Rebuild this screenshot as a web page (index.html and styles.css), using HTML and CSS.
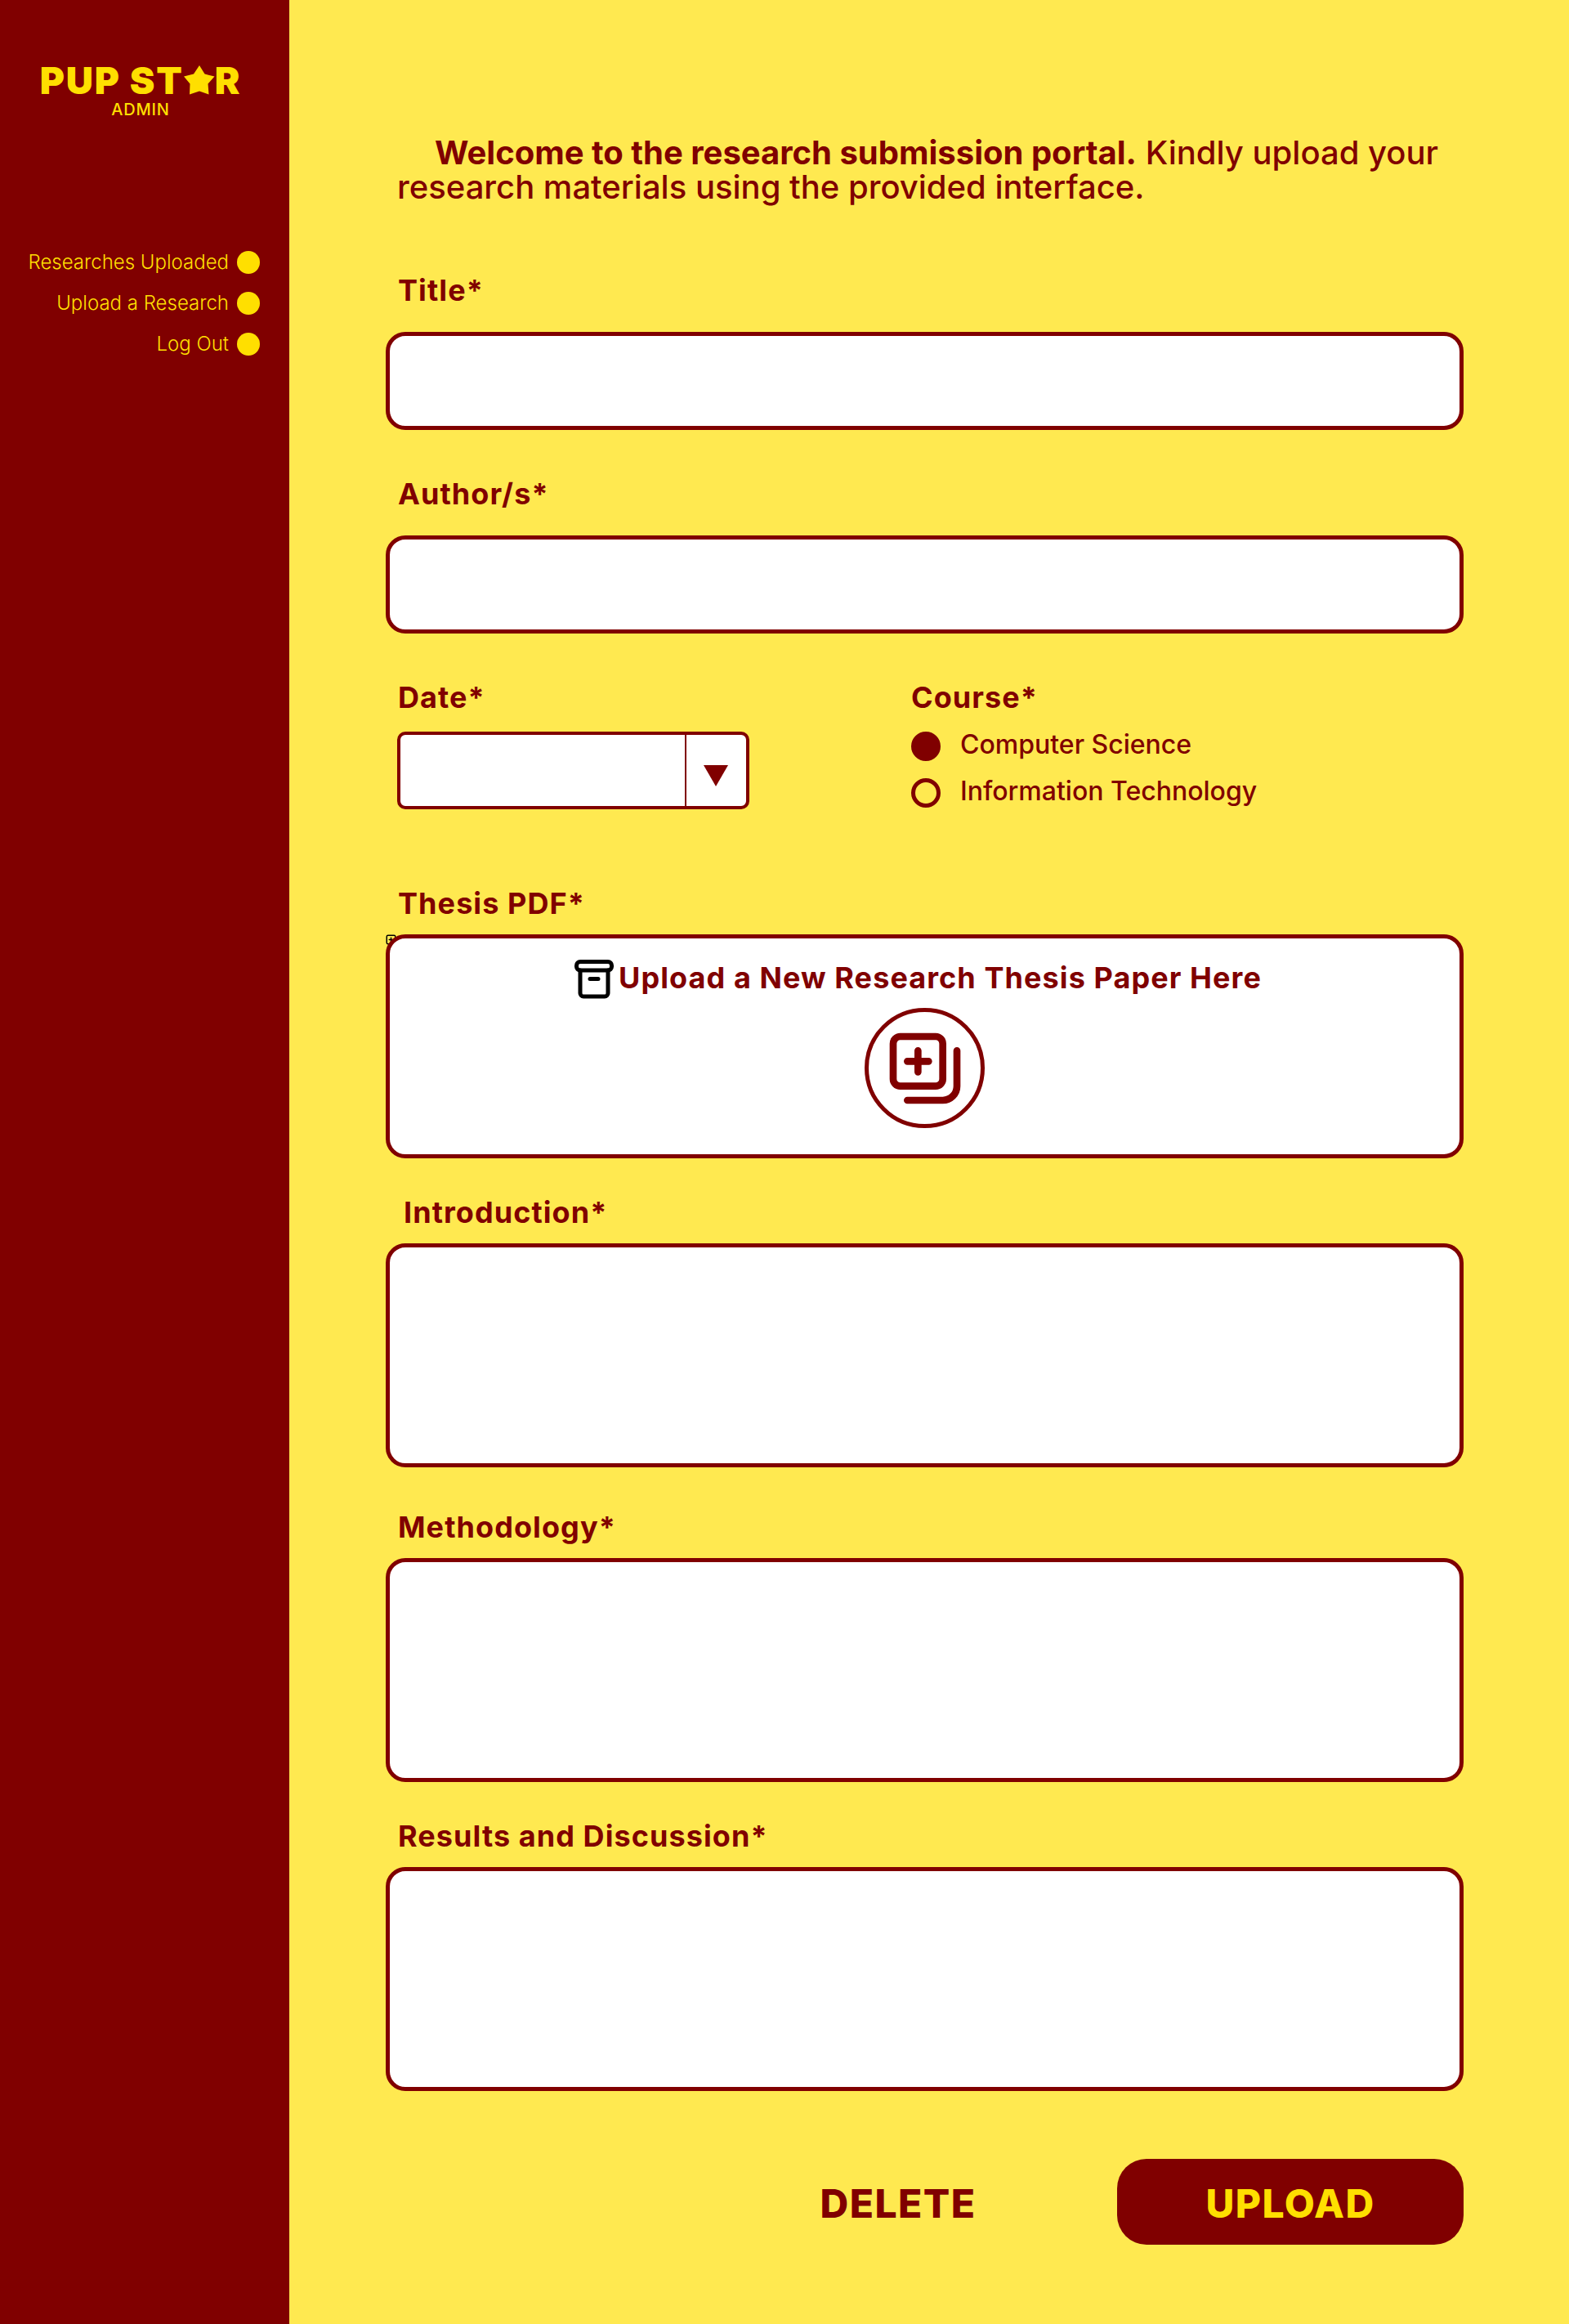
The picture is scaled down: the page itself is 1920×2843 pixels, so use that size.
FILE: index.html
```html
<!DOCTYPE html>
<html lang="en">
<head>
  <meta charset="utf-8">
  <meta name="viewport" content="width=device-width, initial-scale=1">
  <title>PUP Star Admin - Upload a Research</title>
  <link rel="stylesheet" href="styles.css">
</head>
<body>
  <div class="layout">
    <aside class="sidebar">
      <div class="brand">
        <div class="brand-name">
          <span>PUP ST</span>
          <svg class="brand-star" viewBox="0 0 38 36" aria-hidden="true">
            <path d="M19 0 25.500 10.500 37.500 13.500 29.500 22.500 30.500 35.500 19 31.500 7 35.500 7.500 22.500 0 13.500 12 10.500Z"/>
          </svg>
          <span>R</span>
        </div>
        <div class="brand-role">ADMIN</div>
      </div>
      <nav class="nav">
        <a class="nav-link" href="#researches">Researches Uploaded<span class="nav-dot"></span></a>
        <a class="nav-link" href="#upload">Upload a Research<span class="nav-dot"></span></a>
        <a class="nav-link" href="#logout">Log Out<span class="nav-dot"></span></a>
      </nav>
    </aside>

    <main class="main">
      <p class="welcome"><strong>Welcome to the research submission portal.</strong> Kindly upload your research materials using the provided interface.</p>

      <form class="form">
        <div class="field field-roomy">
          <label class="label" for="title">Title*</label>
          <input class="box" id="title" type="text">
        </div>
        <div class="field field-roomy">
          <label class="label" for="authors">Author/s*</label>
          <input class="box" id="authors" type="text">
        </div>

        <div class="columns">
          <div class="field field-medium">
            <label class="label" for="date">Date*</label>
            <div class="picker">
              <select class="picker-select" id="date"><option value=""></option></select>
              <span class="picker-arrow">
                <svg viewBox="0 0 30 26" width="30" height="26" aria-hidden="true"><path d="M0 0H30L15 26Z"/></svg>
              </span>
            </div>
          </div>
          <fieldset class="field field-medium">
            <legend class="label label-flush">Course*</legend>
            <div class="options">
              <label class="option"><input class="radio" type="radio" name="course" checked>Computer Science</label>
              <label class="option"><input class="radio" type="radio" name="course">Information Technology</label>
            </div>
          </fieldset>
        </div>

        <div class="field field-tight">
          <label class="label" for="thesis">Thesis PDF*</label>
          <div class="dropzone-wrap">
            <svg class="corner-icon" viewBox="0 0 24 24" aria-hidden="true">
              <rect x="3" y="3" width="14" height="14" rx="2"/>
              <path d="M7 10h6M10 7v6M21 7v10a4 4 0 0 1-4 4H7"/>
            </svg>
            <div class="dropzone">
              <div class="dropzone-title">
                <svg class="archive-icon" viewBox="0 -4 48 52" aria-hidden="true">
                  <rect x="2.500" y="2.500" width="43" height="10.500" rx="4.500"/>
                  <path d="M7 13v28a4 4 0 0 0 4 4h26a4 4 0 0 0 4-4V13M19 23.500h10"/>
                </svg>
                <span>Upload a New Research Thesis Paper Here</span>
              </div>
              <button class="add-button" id="thesis" type="button" aria-label="Add a thesis file">
                <svg class="add-icon" viewBox="0 0 24 24" aria-hidden="true">
                  <rect x="3" y="3" width="14" height="14" rx="2"/>
                  <path d="M7 10h6M10 7v6M21 7v10a4 4 0 0 1-4 4H7"/>
                </svg>
              </button>
            </div>
          </div>
        </div>

        <div class="field field-tight field-spaced">
          <label class="label label-indent" for="introduction">Introduction*</label>
          <textarea class="box box-tall" id="introduction"></textarea>
        </div>
        <div class="field field-tight">
          <label class="label" for="methodology">Methodology*</label>
          <textarea class="box box-tall" id="methodology"></textarea>
        </div>
        <div class="field field-tight">
          <label class="label" for="results">Results and Discussion*</label>
          <textarea class="box box-tall" id="results"></textarea>
        </div>

        <div class="actions">
          <button class="button button-plain" type="reset">DELETE</button>
          <button class="button button-solid" type="submit">UPLOAD</button>
        </div>
      </form>
    </main>
  </div>
</body>
</html>
```
FILE: styles.css
```css
:root {
  --maroon: #800000;
  --gold: #ffdf00;
  --sand: #ffe950;
  --tracking: 0.03em;
}

* {
  box-sizing: border-box;
}

body {
  margin: 0;
  background: var(--sand);
  color: var(--maroon);
  font-family: Inter, "Liberation Sans", sans-serif;
  font-optical-sizing: none;
}

.layout {
  display: flex;
  min-height: 100vh;
}

/* Sidebar */
.sidebar {
  flex: 0 0 354px;
  padding: 72px 36px 0 24px;
  background: var(--maroon);
  color: var(--gold);
}

.brand {
  display: flex;
  flex-direction: column;
  align-items: center;
  width: 248px;
  margin-left: 24px;
}

.brand-name {
  display: flex;
  align-items: center;
  font-size: 46px;
  font-weight: 900;
  letter-spacing: 0.04em;
  line-height: 52px;
  white-space: pre;
}

.brand-star {
  width: 38px;
  height: 36px;
  fill: var(--gold);
}

.brand-role {
  font-size: 20px;
  font-weight: 500;
  letter-spacing: 0.04em;
  line-height: 20px;
}

.nav {
  display: flex;
  flex-direction: column;
  gap: 22px;
  margin-top: 163px;
}

.nav-link {
  display: flex;
  align-items: center;
  justify-content: flex-end;
  gap: 10px;
  color: inherit;
  font-size: 24px;
  font-weight: 300;
  line-height: 28px;
  text-decoration: none;
  white-space: nowrap;
}

.nav-dot {
  width: 28px;
  height: 28px;
  border-radius: 50%;
  background: var(--gold);
}

/* Main column */
.main {
  flex: 1;
  min-width: 0;
  padding: 166px 129px 97px 118px;
}

.welcome {
  margin: 0 0 83px;
  padding-left: 14px;
  font-size: 40px;
  font-weight: 500;
  line-height: 42px;
  text-indent: 46px;
}

.welcome strong {
  font-weight: 700;
}

.form {
  display: flex;
  flex-direction: column;
}

.field {
  display: flex;
  flex-direction: column;
  min-width: 0;
  margin: 0;
  padding: 0;
  border: 0;
}

.field-roomy {
  gap: 29px;
  margin-bottom: 56px;
}

.field-medium {
  gap: 20px;
}

.field-tight {
  gap: 16px;
  margin-bottom: 44px;
}

.field-spaced {
  margin-bottom: 51px;
}

.label {
  padding: 0 0 0 15px;
  font-size: 36px;
  font-weight: 700;
  letter-spacing: var(--tracking);
  line-height: 44px;
}

.label-indent {
  padding-left: 22px;
}

.label-flush {
  padding-left: 0;
}

.box {
  display: block;
  width: 100%;
  height: 120px;
  padding: 20px 24px;
  border: 5px solid var(--maroon);
  border-radius: 24px;
  background: #fff;
  color: inherit;
  font: inherit;
  font-size: 32px;
  resize: none;
}

.box-tall {
  height: 274px;
}

/* Date and course */
.columns {
  display: grid;
  grid-template-columns: 643fr 676fr;
  margin-bottom: 93px;
}

.picker {
  display: grid;
  grid-template-columns: 1fr 75px;
  width: 431px;
  height: 95px;
  margin-left: 14px;
  border: 4px solid var(--maroon);
  border-radius: 10px;
  background: #fff;
}

.picker-select {
  grid-area: 1 / 1 / 2 / 3;
  padding: 0 90px 0 16px;
  border: 0;
  background: transparent;
  color: inherit;
  font: inherit;
  font-size: 32px;
  appearance: none;
}

.picker-arrow {
  grid-area: 1 / 2;
  display: flex;
  align-items: center;
  justify-content: center;
  padding: 12px 2px 0 0;
  border-left: 2px solid var(--maroon);
  fill: var(--maroon);
  pointer-events: none;
}

.options {
  display: flex;
  flex-direction: column;
  gap: 21px;
  margin-top: 20px;
}

.option {
  display: flex;
  align-items: flex-start;
  gap: 24px;
  font-size: 32px;
  font-weight: 500;
  line-height: 32px;
}

.radio {
  flex: none;
  width: 36px;
  height: 36px;
  margin: 0;
  border: 5px solid var(--maroon);
  border-radius: 50%;
  appearance: none;
}

.radio:checked {
  background: var(--maroon);
}

/* Thesis upload */
.dropzone-wrap {
  position: relative;
}

.corner-icon {
  position: absolute;
  top: -1px;
  left: -1px;
  width: 18px;
  height: 18px;
  fill: none;
  stroke: #000;
  stroke-width: 2;
  stroke-linecap: round;
}

.dropzone {
  position: relative;
  display: flex;
  flex-direction: column;
  align-items: center;
  gap: 11px;
  min-height: 274px;
  padding-top: 22px;
  border: 5px solid var(--maroon);
  border-radius: 24px;
  background: #fff;
}

.dropzone-title {
  display: flex;
  align-items: center;
  gap: 6px;
  padding-right: 16px;
  font-size: 36px;
  font-weight: 700;
  letter-spacing: var(--tracking);
  line-height: 44px;
}

.archive-icon {
  width: 48px;
  height: 52px;
  fill: none;
  stroke: #000;
  stroke-width: 5;
  stroke-linecap: round;
}

.add-button {
  display: flex;
  align-items: center;
  justify-content: center;
  width: 147px;
  height: 147px;
  padding: 0;
  border: 5px solid var(--maroon);
  border-radius: 50%;
  background: #fff;
}

.add-icon {
  width: 104px;
  height: 104px;
  fill: none;
  stroke: var(--maroon);
  stroke-width: 2;
  stroke-linecap: round;
}

/* Actions */
.actions {
  display: flex;
  justify-content: flex-end;
  gap: 56px;
  margin-top: 39px;
}

.button {
  width: 424px;
  height: 105px;
  padding: 4px 0 0;
  border: 0;
  border-radius: 36px;
  font: inherit;
  font-size: 48px;
  font-weight: 800;
  letter-spacing: var(--tracking);
}

.button-plain {
  background: transparent;
  color: var(--maroon);
}

.button-solid {
  background: var(--maroon);
  color: var(--gold);
}
```
